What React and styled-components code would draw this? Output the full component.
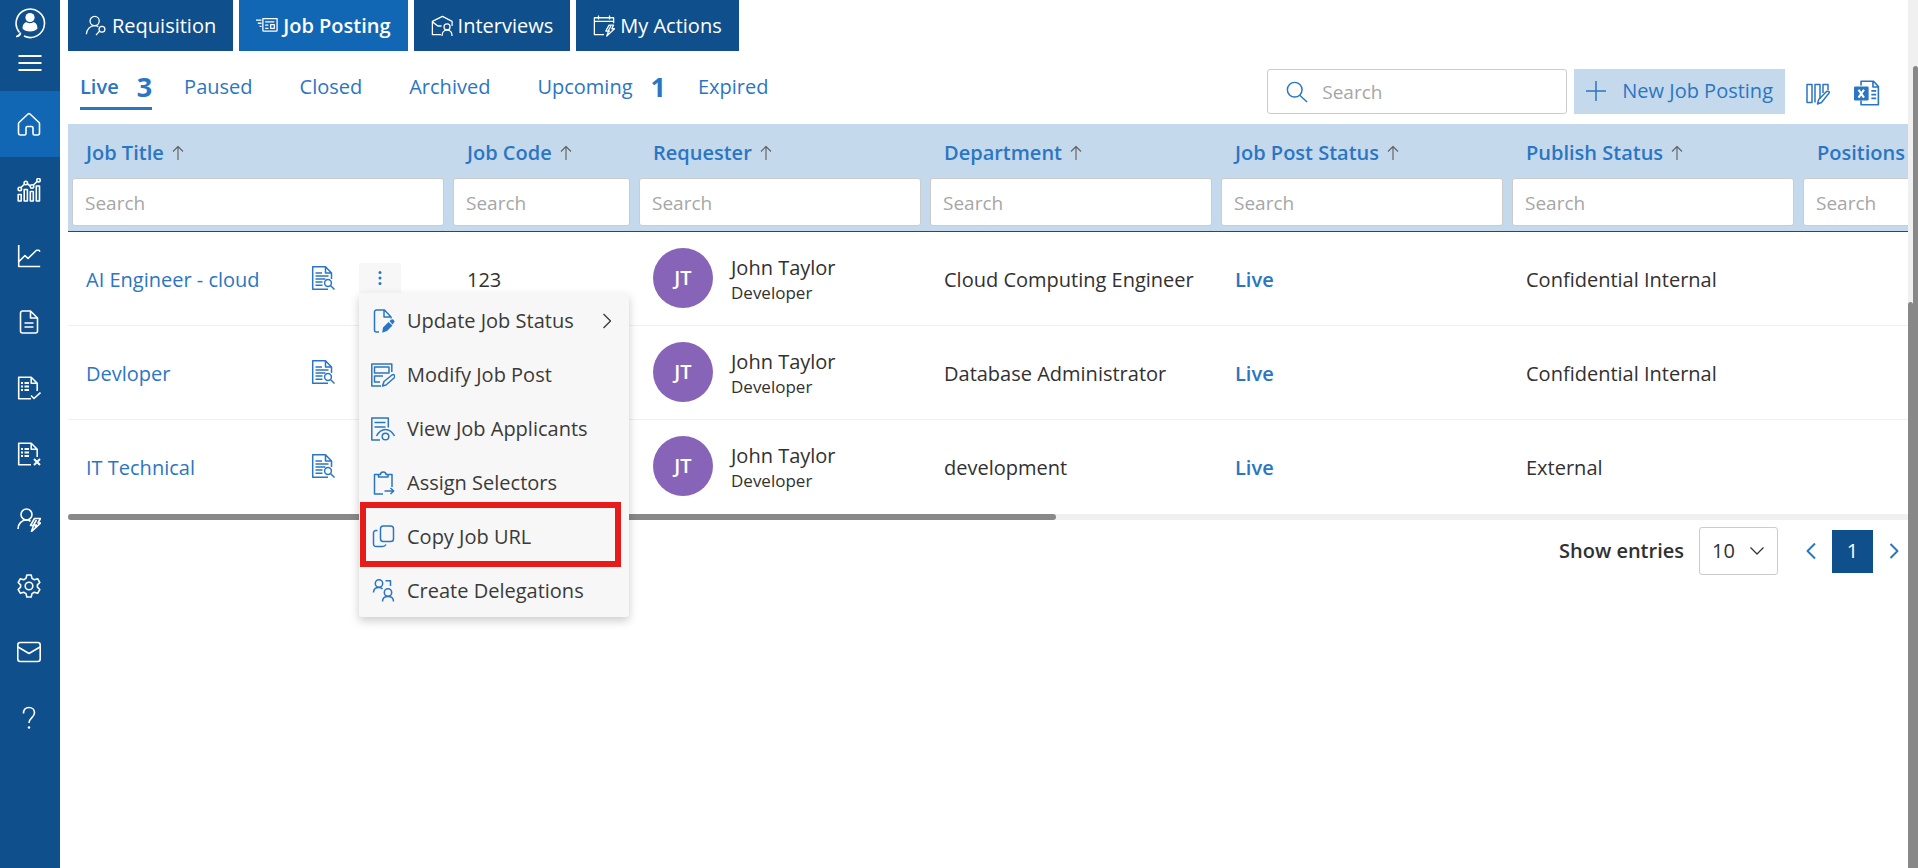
import React from "react";
import styled, { createGlobalStyle, css } from "styled-components";

const GlobalStyle = createGlobalStyle`
  *, *::before, *::after { box-sizing: border-box; }
  body {
    margin: 0;
    background: #fff;
    color: #323130;
    font-family: "Open Sans", "Liberation Sans", sans-serif;
    font-size: 20px;
    line-height: 26px;
  }
  button, input, select { font: inherit; color: inherit; }
  button { border: 0; padding: 0; background: none; cursor: pointer; }
  a { color: inherit; text-decoration: none; }
  svg { display: block; flex: none; }
`;

const navy = "#0f4f8b";
const blue = "#1267b4";
const link = "#2b76c2";
const pale = "#c5d9ed";

/* ---------- icons ---------- */

const Svg = styled.svg.attrs({
  fill: "none",
  stroke: "currentColor",
  strokeLinejoin: "round",
  "aria-hidden": true,
})``;

const Icon = ({ size = 24, width, height, sw = 1.4, box = "0 0 24 24", children }) => (
  <Svg width={width || size} height={height || size} viewBox={box} strokeWidth={sw}>
    {children}
  </Svg>
);

const AccountIcon = () => (
  <Icon size={32} box="0 0 32 32" sw={1.6}>
    <path d="M5.5 25.5A14.2 14.2 0 1 1 10 29" />
    <path d="M2 29.5c2.500.2 4.500-1.500 4.500-4" fill="currentColor" />
    <circle cx="16" cy="10.500" r="4.600" fill="currentColor" stroke="none" />
    <path d="M8.500 21.500c0-4 2-6.300 4.200-6.300 2 1.400 4.600 1.400 6.600 0 2.200 0 4.200 2.300 4.200 6.300-2.500 4-12.500 4-15 0z" fill="currentColor" stroke="none" />
  </Icon>
);
const HamburgerIcon = () => (
  <Icon sw={2}><path d="M.5 4h23M.5 11h23M.5 18h23" /></Icon>
);
const HomeIcon = () => (
  <Icon sw={1.6}>
    <path d="M2 10.500 11 2q1-.8 2 0l9 8.500q.5.5.5 1.300V21a2 2 0 0 1-2 2h-3a1.500 1.500 0 0 1-1.500-1.500V16a1.500 1.500 0 0 0-1.500-1.500h-4A1.500 1.500 0 0 0 9 16v5.500A1.500 1.500 0 0 1 7.500 23h-4a2 2 0 0 1-2-2v-9.200q0-.8.5-1.300z" />
  </Icon>
);
const BarsIcon = () => (
  <Icon sw={1.6}>
    <path d="M1.200 16.500h3v6.500h-3zM7.200 11.500h3.200V23H7.200zM13.300 13.500h3V23h-3zM19.300 8h3.200v15h-3.200zM4 9.500l3-3M10.500 6l3 2M16.500 7l3.500-3.500" />
    <circle cx="2.800" cy="11" r="1.700" /><circle cx="8.800" cy="5" r="1.700" />
    <circle cx="15" cy="8.500" r="1.700" /><circle cx="21.500" cy="2.200" r="1.700" />
  </Icon>
);
const TrendIcon = () => (
  <Icon sw={1.6}><path d="M1.700 1v21.500h21.500M2 17.500l6-6 3 3 8.500-8.300 2 0q1.200 0 1.200 1.500" /></Icon>
);
const PageIcon = () => (
  <Icon sw={1.6}>
    <path d="M13.500 1H5.500a2 2 0 0 0-2 2v18a2 2 0 0 0 2 2h13a2 2 0 0 0 2-2V8zM13.500 1v7h7M7.500 13h9M7.500 17h9" />
  </Icon>
);
const ListPage = ({ children }) => (
  <Icon sw={1.6}>
    <path d="M14 22.800H1.700V1.200h12.500l6 6V15M14.200 1.200v6h6" />
    <path d="M4 7h2M7.500 7H12M4 10.500h2M7.500 10.500H12M4 14h2M7.500 14H12" strokeWidth="2" />
    {children}
  </Icon>
);
const CheckPageIcon = () => <ListPage><path d="M14 19.500l3 3 6.500-6" /></ListPage>;
const CrossPageIcon = () => <ListPage><path d="M17 17l6 6M23 17l-6 6" strokeWidth="2" /></ListPage>;
const UserBoltIcon = () => (
  <Icon sw={1.6}>
    <circle cx="9.500" cy="6.500" r="5.500" />
    <path d="M1 21c0-5 3.500-9 8.500-9q2 0 4 1.200M17.500 10.500h6l-2.500 4.500h2.500L14.500 23.500l2-6h-3z" />
    <path d="M19.500 12l-3 5h3l-1.500 2.500" />
  </Icon>
);
const GearIcon = () => (
  <Icon sw={1.6}>
    <circle cx="12" cy="12" r="3.800" />
    <path d="M9.800 1h4.400l.8 3.400 2.300 1.300 3.300-1 2.200 3.800-2.400 2.400v2.200l2.400 2.400-2.200 3.800-3.300-1-2.300 1.300-.8 3.400H9.800L9 19.600l-2.300-1.300-3.300 1-2.200-3.800 2.400-2.400v-2.200L1.200 8.500l2.200-3.800 3.300 1L9 4.400z" />
  </Icon>
);
const MailIcon = () => (
  <Icon sw={1.6}><rect x=".8" y="2.500" width="22.400" height="19" rx="2.500" /><path d="M1 7l11 6.500L23 7" /></Icon>
);
const HelpIcon = () => (
  <Icon sw={1.6}>
    <path d="M6.500 7.500c0-4 2.500-6 5.500-6s5.500 2 5.500 5.200c0 4.800-5.500 5-5.500 10.300" />
    <circle cx="12" cy="21.500" r="1.200" fill="currentColor" stroke="none" />
  </Icon>
);
const RequisitionIcon = () => (
  <Icon size={22}>
    <circle cx="10.500" cy="6.500" r="5" />
    <path d="M1.500 21c.3-5 4-9.500 9-9.500 1.500 0 3 .5 4 1.200M16 17.500l-4 4.500" />
    <circle cx="18.500" cy="15.500" r="3.200" />
  </Icon>
);
const PostingIcon = () => (
  <Icon size={22}>
    <path d="M7.500 4h15.500v12.500q0 1-1 1H8.500q-1 0-1-1zM0 5.500h6M2 9h4M4 12.500h2M10 7.500h10M10 11h3.500M10 14.500h3.500" />
    <path d="M16 10.500h4v4h-4z" />
  </Icon>
);
const InterviewIcon = () => (
  <Icon size={22}>
    <path d="M11 21.500H1.500V7L12.500 1.500 23 7v5M1.500 7.500l6 4.500h4" />
    <circle cx="17.500" cy="13" r="3.300" />
    <path d="M12 23c0-4 2.200-6.500 5.500-6.500S23 19 23 23" />
  </Icon>
);
const ActionsIcon = () => (
  <Icon size={22}>
    <path d="M12 21.500H1.500V3h21v6M1.500 7h21M6 .5v4.500M18 .5v4.500M17.500 11h5l-2 4h3l-8.500 8 2-5.500h-3zM19.500 12l-3 5.500 2 0" />
  </Icon>
);
const SearchIcon = () => (
  <Icon size={22} sw={1.6}><circle cx="9.500" cy="9.500" r="8" /><path d="M15 15.500l8 7.500" /></Icon>
);
const PlusIcon = () => <Icon size={20} sw={1.8}><path d="M12 0v24M0 12h24" /></Icon>;
const ColumnsIcon = () => (
  <Icon sw={1.5}>
    <path d="M1 3.500h5v18H1zM9 18V3.500h5V18M9 21.500V16M17 12V3.500h5V9" />
    <path d="M11.500 23l1.200-4.500L20.500 10.500q2-1 3 1L15.500 21.500z" />
  </Icon>
);
const ExcelIcon = () => (
  <Icon sw={1.5} size={26}>
    <path d="M6.500 5V1.200H18L22.500 6v16.800h-16V19M17.500 1.200V6.500h5M16 10h4.500M16 13.500h4.500M16 17h4.500" />
    <rect x="0" y="6" width="13.500" height="13" rx="1.200" fill="currentColor" stroke="none" />
    <path d="M4.200 9l5 7.200M9.200 9l-5 7.200" stroke="#fff" strokeWidth="2" />
  </Icon>
);
const PreviewIcon = () => (
  <Icon sw={1.5}>
    <path d="M17 23.200H1.700V.8h12.800L20.500 7v6M14.500 1v6h6M4.500 7h6.500M4.500 10h13M4.500 13h10M4.500 16h7M4.500 19.200h7" />
    <circle cx="17" cy="17" r="3.400" /><path d="M19.500 19.500l4 4" />
  </Icon>
);
const SortArrow = () => (
  <Icon width={12} height={16} box="0 0 12 16" sw={1.2}><path d="M6 15V1.500M1 6.500l5-5 5 5" /></Icon>
);
const DotsIcon = () => (
  <Icon size={16} box="0 0 16 16">
    {[2.5, 8, 13.5].map((y) => <circle key={y} cx="8" cy={y} r="1.500" fill="currentColor" stroke="none" />)}
  </Icon>
);
const UpdateIcon = () => (
  <Icon sw={1.5}>
    <path d="M8 23H5.500a2 2 0 0 1-2-2V3a2 2 0 0 1 2-2h8L20 8v1.500M13 1v7h6" />
    <path d="M12 18.500l5.500-5.500 4 3.500-5.500 5.500-4.800 1.800zM18.500 12l1.500-1.200q1.500-1 2.800.2 1.400 1.500 0 2.800L21.500 15.500z" fill="currentColor" stroke="none" />
  </Icon>
);
const ModifyIcon = () => (
  <Icon sw={1.5}>
    <path d="M10 23H.8V1h20v8M3.500 4h14.500v6H3.500zM12 13H3.500v6H9M11.500 23l1.500-4.500 8-6.500q2-1 2.500.5t-.5 2.500L15 22z" />
  </Icon>
);
const ApplicantsIcon = () => (
  <Icon sw={1.5}>
    <path d="M9 23H.8V1h16.500v9.500M3.500 5.500h11M3.500 10h11M5.500 19q3.500-6.500 9-6.500t9 6.500" />
    <circle cx="14.500" cy="19.500" r="3.300" />
  </Icon>
);
const AssignIcon = () => (
  <Icon sw={1.5}>
    <path d="M12 23H3.500V3.500H7.500M17 3.500h4V16M7.500 6V3.500h2q0-2.500 2.700-2.500T15 3.500h2V6zM13.500 20h9M19.500 17l3.200 3-3.200 3" />
  </Icon>
);
const CopyIcon = () => (
  <Icon sw={1.5}>
    <rect x="9.500" y="1" width="13" height="15.500" rx="2.800" />
    <path d="M6.500 5.500H5A2.500 2.500 0 0 0 2.500 8v11A2.500 2.500 0 0 0 5 21.500h6.500q2.500 0 3.500-2" />
  </Icon>
);
const DelegateIcon = () => (
  <Icon sw={1.5}>
    <circle cx="8" cy="4.500" r="3.700" /><circle cx="17" cy="13.500" r="3.700" />
    <path d="M2.500 13.500q0-5 5.500-5 2.200 0 3.500 1.500M11.500 22.500q0-5 5.500-5t5.500 5M14.500 1.800h5V7" />
  </Icon>
);
const ChevronRight = ({ sw = 1.3 }) => (
  <Icon width={10} height={18} box="0 0 10 18" sw={sw}><path d="M1.500 2L8.500 9l-7 7" /></Icon>
);
const ChevronLeft = ({ sw = 1.3 }) => (
  <Icon width={10} height={18} box="0 0 10 18" sw={sw}><path d="M9 1.500L1.500 9l7.500 7.500" /></Icon>
);
const ChevronDown = () => (
  <Icon width={14} height={8} box="0 0 14 8" sw={1.2}><path d="M.5.500L7 7l6.500-6.500" /></Icon>
);

/* ---------- shell ---------- */

const Shell = styled.div`
  display: flex;
  min-height: 100vh;
`;

const Sidebar = styled.nav`
  flex: none;
  width: 60px;
  background: ${navy};
  color: #fff;
`;

const SidebarTop = styled.div`
  display: flex;
  flex-direction: column;
  align-items: center;
  gap: 13px;
  height: 91px;
  padding-top: 7px;
`;

const SideLink = styled.a`
  display: flex;
  align-items: center;
  justify-content: center;
  height: 66px;
  padding-right: 2px;
  background: ${(p) => (p.$active ? blue : "transparent")};
`;

const Main = styled.main`
  flex: 1;
  min-width: 0;
  padding-left: 8px;
  overflow-x: clip;
`;

const Rail = styled.div`
  flex: none;
  width: 5px;
  padding-top: ${(p) => p.$offset}px;
  background: #f0f0f0;
  display: flex;
`;

const RailThumb = styled.div`
  flex: 1;
  background: #888;
  border-radius: 3px 3px 0 0;
`;

const ModuleTabs = styled.div`
  display: flex;
  gap: 6px;
`;

const ModuleTab = styled.button`
  display: flex;
  align-items: center;
  justify-content: center;
  gap: 5px;
  height: 51px;
  padding: 1px 17px 0;
  color: #fff;
  background: ${(p) => (p.$active ? blue : navy)};
  font-weight: ${(p) => (p.$active ? 600 : 400)};
`;

const Toolbar = styled.div`
  display: flex;
  justify-content: space-between;
  padding: 18px 28px 10px 12px;
`;

const StatusTabs = styled.div`
  display: flex;
  align-items: flex-start;
`;

const StatusTab = styled.button`
  display: flex;
  align-items: center;
  gap: 18px;
  height: 41px;
  padding-bottom: 6px;
  margin-right: ${(p) => (p.$counted ? 32 : 47)}px;
  color: ${link};
  ${(p) =>
    p.$active &&
    css`
      font-weight: 600;
      padding-bottom: 3px;
      border-bottom: 3px solid ${link};
    `}
`;

const Count = styled.span`
  font-size: 27px;
  font-weight: 700;
`;

const Tools = styled.div`
  display: flex;
  align-items: center;
`;

const SearchBox = styled.label`
  display: flex;
  align-items: center;
  gap: 14px;
  width: 300px;
  height: 45px;
  padding: 0 18px;
  border: 1px solid #ccc;
  border-radius: 3px;
  color: ${link};
`;

const field = css`
  width: 100%;
  min-width: 0;
  outline: 0;
  font-size: 19px;
  color: #323130;
  &::placeholder { color: #a6a6a6; opacity: 1; }
`;

const SearchInput = styled.input`
  ${field}
  border: 0;
  padding: 0;
  background: none;
`;

const NewButton = styled.button`
  display: flex;
  align-items: center;
  gap: 16px;
  height: 45px;
  margin: 0 21px 0 7px;
  padding: 0 12px 2px;
  background: ${pale};
  color: ${link};
`;

const ToolButton = styled.button`
  display: flex;
  margin-right: ${(p) => (p.$last ? 0 : 24)}px;
  padding-top: 3px;
  color: ${link};
`;

/* ---------- table ---------- */

const Table = styled.table`
  width: 2022px;
  table-layout: fixed;
  border-collapse: separate;
  border-spacing: 0;
`;

const HeadCell = styled.th`
  height: 108px;
  padding: 0 5px 5px 4px;
  vertical-align: bottom;
  text-align: left;
  font-weight: 600;
  color: ${link};
  background: ${pale};
  border-bottom: 1px solid ${navy};
`;

const HeadLabel = styled.div`
  display: flex;
  align-items: center;
  gap: 8px;
  height: 51px;
  padding-left: 14px;
  white-space: nowrap;
  svg { color: #666; }
`;

const FilterInput = styled.input`
  ${field}
  display: block;
  height: 48px;
  padding: 2px 12px 0;
  border: 1px solid #ccc;
  border-radius: 3px;
  background: #fff;
  font-weight: 400;
`;

const Cell = styled.td`
  height: 94px;
  padding: 2px 0 0 18px;
  white-space: nowrap;
  border-bottom: ${(p) => (p.$last ? 0 : 1)}px solid #f0f0f0;
`;

const TitleCell = styled.div`
  display: flex;
  align-items: center;
  color: ${link};
`;

const JobLink = styled.a`
  flex: 1;
`;

const PreviewButton = styled.button`
  display: flex;
  margin: 0 24px 4px 0;
`;

const MenuAnchor = styled.div`
  position: relative;
  width: 42px;
  height: 30px;
  margin: 0 48px 4px 0;
`;

const DotsButton = styled.button`
  display: flex;
  align-items: center;
  justify-content: center;
  width: 100%;
  height: 100%;
  background: #f7f7f7;
  border-radius: 3px 3px 0 0;
`;

const Person = styled.div`
  display: flex;
  align-items: center;
  gap: 18px;
`;

const Avatar = styled.span`
  display: flex;
  align-items: center;
  justify-content: center;
  width: 60px;
  height: 60px;
  margin-bottom: 4px;
  border-radius: 50%;
  background: #8764b8;
  color: #fff;
  font-size: 20px;
  font-weight: 600;
`;

const PersonRole = styled.div`
  font-size: 17px;
  line-height: 24px;
`;

const Status = styled.span`
  color: ${link};
  font-weight: 600;
`;

const HTrack = styled.div`
  height: 6px;
  background: #f0f0f0;
`;

const HThumb = styled.div`
  width: 53.7%;
  height: 100%;
  background: #888;
  border-radius: 3px;
`;

/* ---------- row menu ---------- */

const Menu = styled.div`
  position: absolute;
  top: 100%;
  left: 0;
  z-index: 2;
  width: 270px;
  background: #f7f7f7;
  border-radius: 3px;
  box-shadow: 0 4px 10px rgba(0, 0, 0, 0.2);
  color: #3b3a39;
`;

const MenuItem = styled.button`
  position: relative;
  display: flex;
  align-items: center;
  gap: 12px;
  width: 100%;
  height: 54px;
  padding: 2px 17px 0 12px;
  text-align: left;
  svg:first-child { color: ${link}; }
`;

const MenuText = styled.span`
  flex: 1;
`;

const Highlight = styled.span`
  position: absolute;
  inset: -7px 8px -4px 1px;
  border: 6px solid #e81b1b;
  pointer-events: none;
`;

/* ---------- footer ---------- */

const Footer = styled.div`
  display: flex;
  align-items: center;
  justify-content: flex-end;
  padding: 7px 9px 0 0;
`;

const EntriesLabel = styled.label`
  display: flex;
  align-items: center;
  gap: 15px;
  font-weight: 600;
`;

const SelectWrap = styled.span`
  position: relative;
  svg {
    position: absolute;
    right: 14px;
    top: 20px;
    pointer-events: none;
  }
`;

const EntriesSelect = styled.select`
  appearance: none;
  display: block;
  width: 79px;
  height: 48px;
  padding: 0 12px;
  border: 1px solid #ccc;
  border-radius: 3px;
  background: #fff;
  font-weight: 400;
`;

const Pager = styled.nav`
  display: flex;
  align-items: center;
  gap: 16px;
  margin-left: 28px;
  color: ${link};
`;

const PageButton = styled.button`
  width: 41px;
  height: 43px;
  background: ${navy};
  color: #fff;
`;

/* ---------- data ---------- */

const sideItems = [
  ["Home", HomeIcon], ["Dashboard", BarsIcon], ["Analytics", TrendIcon], ["Documents", PageIcon],
  ["Approved", CheckPageIcon], ["Rejected", CrossPageIcon], ["User actions", UserBoltIcon],
  ["Settings", GearIcon], ["Mail", MailIcon], ["Help", HelpIcon],
];
const modules = [
  ["Requisition", RequisitionIcon], ["Job Posting", PostingIcon],
  ["Interviews", InterviewIcon], ["My Actions", ActionsIcon],
];
const statuses = [["Live", 3], ["Paused"], ["Closed"], ["Archived"], ["Upcoming", 1], ["Expired"]];
const columns = [
  ["Job Title", 381], ["Job Code", 186], ["Requester", 291], ["Department", 291],
  ["Job Post Status", 291], ["Publish Status", 291], ["Positions", 291],
];
const rows = [
  { title: "AI Engineer - cloud", code: "123", dept: "Cloud Computing Engineer", publish: "Confidential Internal", menu: true },
  { title: "Devloper", code: "", dept: "Database Administrator", publish: "Confidential Internal" },
  { title: "IT Technical", code: "", dept: "development", publish: "External" },
];
const menuItems = [
  ["Update Job Status", UpdateIcon], ["Modify Job Post", ModifyIcon], ["View Job Applicants", ApplicantsIcon],
  ["Assign Selectors", AssignIcon], ["Copy Job URL", CopyIcon], ["Create Delegations", DelegateIcon],
];

const RowMenu = () => (
  <Menu role="menu">
    {menuItems.map(([name, Glyph]) => (
      <MenuItem key={name} role="menuitem">
        <Glyph />
        <MenuText>{name}</MenuText>
        {name === "Update Job Status" && <ChevronRight />}
        {name === "Copy Job URL" && <Highlight />}
      </MenuItem>
    ))}
  </Menu>
);

const JobTable = () => (
  <Table>
    <colgroup>
      {columns.map(([name, width]) => <col key={name} width={width} />)}
    </colgroup>
    <thead>
      <tr>
        {columns.map(([name]) => (
          <HeadCell key={name} scope="col">
            <HeadLabel>{name}<SortArrow /></HeadLabel>
            <FilterInput placeholder="Search" aria-label={`Search ${name}`} />
          </HeadCell>
        ))}
      </tr>
    </thead>
    <tbody>
      {rows.map((row, i) => {
        const last = i === rows.length - 1;
        return (
          <tr key={row.title}>
            <Cell $last={last}>
              <TitleCell>
                <JobLink href="#job">{row.title}</JobLink>
                <PreviewButton aria-label="Preview"><PreviewIcon /></PreviewButton>
                <MenuAnchor>
                  {row.menu && <DotsButton aria-label="More options"><DotsIcon /></DotsButton>}
                  {row.menu && <RowMenu />}
                </MenuAnchor>
              </TitleCell>
            </Cell>
            <Cell $last={last}>{row.code}</Cell>
            <Cell $last={last}>
              <Person>
                <Avatar>JT</Avatar>
                <div>
                  <div>John Taylor</div>
                  <PersonRole>Developer</PersonRole>
                </div>
              </Person>
            </Cell>
            <Cell $last={last}>{row.dept}</Cell>
            <Cell $last={last}><Status>Live</Status></Cell>
            <Cell $last={last}>{row.publish}</Cell>
            <Cell $last={last} />
          </tr>
        );
      })}
    </tbody>
  </Table>
);

export default function App() {
  return (
    <>
      <GlobalStyle />
      <Shell>
        <Sidebar aria-label="Main">
          <SidebarTop>
            <button aria-label="Account"><AccountIcon /></button>
            <button aria-label="Menu"><HamburgerIcon /></button>
          </SidebarTop>
          {sideItems.map(([name, Glyph], i) => (
            <SideLink key={name} href="#section" aria-label={name} $active={i === 0}><Glyph /></SideLink>
          ))}
        </Sidebar>
        <Main>
          <ModuleTabs>
            {modules.map(([name, Glyph]) => (
              <ModuleTab key={name} $active={name === "Job Posting"}><Glyph />{name}</ModuleTab>
            ))}
          </ModuleTabs>
          <Toolbar>
            <StatusTabs>
              {statuses.map(([name, count]) => (
                <StatusTab key={name} $active={name === "Live"} $counted={count > 0}>
                  {name}{count && <Count>{count}</Count>}
                </StatusTab>
              ))}
            </StatusTabs>
            <Tools>
              <SearchBox>
                <SearchIcon />
                <SearchInput placeholder="Search" aria-label="Search" />
              </SearchBox>
              <NewButton><PlusIcon />New Job Posting</NewButton>
              <ToolButton aria-label="Edit columns"><ColumnsIcon /></ToolButton>
              <ToolButton aria-label="Export to Excel" $last><ExcelIcon /></ToolButton>
            </Tools>
          </Toolbar>
          <JobTable />
          <HTrack><HThumb /></HTrack>
          <Footer>
            <EntriesLabel>
              Show entries
              <SelectWrap>
                <EntriesSelect defaultValue="10"><option>10</option><option>25</option></EntriesSelect>
                <ChevronDown />
              </SelectWrap>
            </EntriesLabel>
            <Pager aria-label="Pages">
              <button aria-label="Previous"><ChevronLeft sw={2} /></button>
              <PageButton>1</PageButton>
              <button aria-label="Next"><ChevronRight sw={2} /></button>
            </Pager>
          </Footer>
        </Main>
        <Rail $offset={302}><RailThumb /></Rail>
        <Rail $offset={66}><RailThumb /></Rail>
      </Shell>
    </>
  );
}
